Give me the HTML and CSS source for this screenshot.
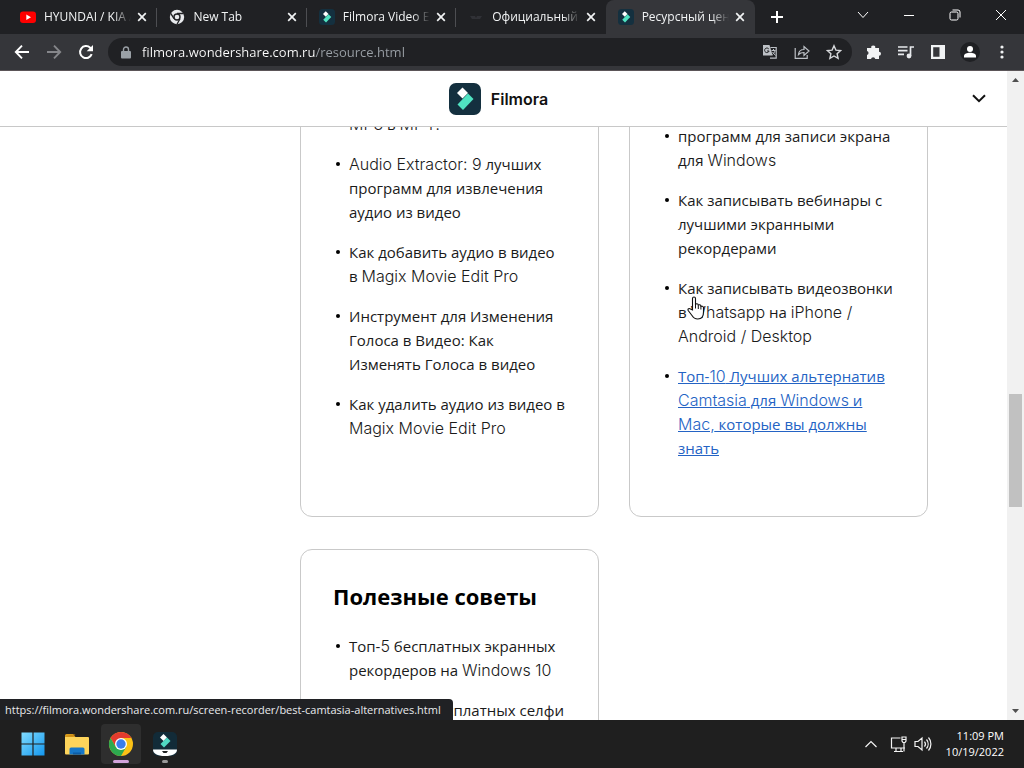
FILE: index.html
```html
<!DOCTYPE html>
<html lang="ru">
<head>
<meta charset="utf-8">
<title>Ресурсный центр</title>
<link rel="stylesheet" href="styles.css">
</head>
<body>
<svg class="defs" width="0" height="0" aria-hidden="true">
  <symbol id="x" viewBox="0 0 10 10"><path d="M1.2 1.2l7.6 7.6M8.8 1.2L1.2 8.8" stroke="#f1f3f4" stroke-width="1.7" fill="none"/></symbol>
  <symbol id="filmora" viewBox="0 0 32 32"><rect width="32" height="32" rx="7" fill="#14303f"/><path d="M13.5 4.500l5.500 5.500-5.500 5.500-5.500-5.500z" fill="#fff"/><path d="M19 10.500l5.500 5.500-10.500 11-5.500-5.500z" fill="#50e3c2"/></symbol>
</svg>

<header class="browser">
  <div class="tabstrip">
    <nav class="tabs" aria-label="Вкладки">
      <div class="tab">
        <svg class="favicon" viewBox="0 0 16 16"><rect y="2.500" width="16" height="11.500" rx="3" fill="#f00"/><path d="M6.300 5.600v5.300L11 8.200z" fill="#fff"/></svg>
        <span class="tab-title">HYUNDAI / KIA A</span>
        <button class="tab-close" aria-label="Закрыть"><svg width="10" height="10"><use href="#x"/></svg></button>
      </div>
      <div class="tab">
        <svg class="favicon" viewBox="0 0 16 16"><circle cx="8" cy="8" r="7.200" fill="#e8eaed"/><circle cx="8" cy="8" r="3" fill="#e8eaed" stroke="#202124" stroke-width="1.400"/><path d="M8 4.500h6.500M5 9.700L1.700 4.300M11 9.800L8 15.200" stroke="#202124" stroke-width="1.300"/></svg>
        <span class="tab-title">New Tab</span>
        <button class="tab-close" aria-label="Закрыть"><svg width="10" height="10"><use href="#x"/></svg></button>
      </div>
      <div class="tab">
        <svg class="favicon"><use href="#filmora"/></svg>
        <span class="tab-title">Filmora Video Ed</span>
        <button class="tab-close" aria-label="Закрыть"><svg width="10" height="10"><use href="#x"/></svg></button>
      </div>
      <div class="tab before-active">
        <svg class="favicon" viewBox="0 0 16 16"><path d="M2 7h5l1 2 1-2h5l-2 3H4z" fill="#303136"/></svg>
        <span class="tab-title">Официальный с</span>
        <button class="tab-close" aria-label="Закрыть"><svg width="10" height="10"><use href="#x"/></svg></button>
      </div>
      <div class="tab active">
        <svg class="favicon"><use href="#filmora"/></svg>
        <span class="tab-title">Ресурсный цент</span>
        <button class="tab-close" aria-label="Закрыть"><svg width="10" height="10"><use href="#x"/></svg></button>
      </div>
    </nav>
    <button class="new-tab" aria-label="Новая вкладка"><svg width="14" height="14" viewBox="0 0 14 14"><path d="M7 1v12M1 7h12" stroke="#fff" stroke-width="2"/></svg></button>
    <div class="window-controls">
      <button aria-label="Поиск вкладок"><svg width="12" height="12" viewBox="0 0 12 12"><path d="M1 3l5 5.500L11 3" class="thin"/></svg></button>
      <button aria-label="Свернуть"><svg width="12" height="12" viewBox="0 0 12 12"><path d="M1 6.500h10" class="thin"/></svg></button>
      <button aria-label="Развернуть"><svg width="12" height="12" viewBox="0 0 12 12"><rect x="1" y="3" width="8" height="8" rx="1.500" class="thin"/><path d="M3.500 1H9a2 2 0 0 1 2 2v5.500" class="thin"/></svg></button>
      <button aria-label="Закрыть окно"><svg width="12" height="12" viewBox="0 0 12 12"><path d="M1 1l10 10M11 1L1 11" class="thin"/></svg></button>
    </div>
  </div>

  <div class="toolbar">
    <div class="group">
      <button class="tool" aria-label="Назад"><svg viewBox="0 0 16 16"><path d="M15 8H2M8 1.700L1.800 8 8 14.300" fill="none" stroke="#fff" stroke-width="1.900"/></svg></button>
      <button class="tool" aria-label="Вперёд"><svg viewBox="0 0 16 16"><path d="M1 8h13M8 1.700L14.200 8 8 14.300" fill="none" stroke="#85868a" stroke-width="1.900"/></svg></button>
      <button class="tool" aria-label="Обновить"><svg viewBox="0 0 16 16"><path d="M13.700 10.200A6 6 0 1 1 12.200 3.700L14 5.500" fill="none" stroke="#fff" stroke-width="2"/><path d="M15 1v6.300H8.700z" fill="#fff"/></svg></button>
    </div>
    <div class="address">
      <svg class="lock" viewBox="0 0 10 13"><path d="M2.500 6V3.500a2.500 2.500 0 0 1 5 0V6" fill="none" stroke="#9aa0a6" stroke-width="1.400"/><rect y="5" width="10" height="7.500" rx="1" fill="#9aa0a6"/></svg>
      <input type="text" aria-label="Адресная строка" value="filmora.wondershare.com.ru/resource.html">
      <button class="tool" aria-label="Перевести"><svg viewBox="0 0 16 16"><path d="M8.500 3.500h5.700v10.700H8" fill="none" stroke="#bdc1c6" stroke-width="1.200"/><path d="M1 1h6.500l3.200 10.500H1z" fill="#bdc1c6"/><path d="M6.800 5A2.300 2.300 0 1 0 7.100 7H5" fill="none" stroke="#202124"/><path d="M9.500 6.500h4M11.500 5v1.500M13 6.500c-.4 2-1.500 3-2.500 4M10.500 8l3 3.500" fill="none" stroke="#bdc1c6"/></svg></button>
      <button class="tool" aria-label="Поделиться"><svg viewBox="0 0 16 16"><path d="M1.200 4v10.300h12V11M4.500 10.500c.4-3.500 2.500-5 5.500-5V2.500l5 4.500-5 4.500v-3c-2.500 0-4 .4-5.500 2z" fill="none" stroke="#bdc1c6" stroke-width="1.200"/></svg></button>
      <button class="tool" aria-label="Закладка"><svg viewBox="0 0 16 16"><path d="M8 1.800l1.900 4.300 4.700.5-3.500 3.100 1 4.700L8 12l-4.100 2.400 1-4.700-3.500-3.100 4.700-.5z" fill="none" stroke="#d5d7da" stroke-width="1.400"/></svg></button>
    </div>
    <div class="group">
      <button class="tool" aria-label="Расширения"><svg viewBox="0 0 16 16"><path d="M1 4h4.300a2 2 0 1 1 3.900 0H13v3.800a2 2 0 1 1 0 4V15H9.300a2.200 2.200 0 0 0-4.300 0H1v-3.900a2.200 2.200 0 0 0 0-4.200z" fill="#f1f3f4"/></svg></button>
      <button class="tool" aria-label="Медиа"><svg viewBox="0 0 16 16"><path d="M0 3h9.500M0 6.700h9.500M0 10.300h6M12.500 12V3H16" stroke="#e8eaed" stroke-width="1.700" fill="none"/><circle cx="11" cy="12" r="2.400" fill="#e8eaed"/></svg></button>
      <button class="tool" aria-label="Боковая панель"><svg viewBox="0 0 16 16"><path d="M1 1h14v14H1zM3.200 3.200v9.600h6.300V3.200z" fill="#f1f3f4" fill-rule="evenodd"/></svg></button>
      <button class="tool avatar" aria-label="Профиль"><svg viewBox="0 0 20 20"><circle cx="10" cy="10" r="10" fill="#1f2023"/><circle cx="10" cy="7" r="3" fill="#fff"/><path d="M4 15.500v-1.500c0-2.200 3-3.200 6-3.200s6 1 6 3.200v1.500z" fill="#fff"/></svg></button>
      <button class="tool" aria-label="Меню"><svg viewBox="0 0 16 16"><g fill="#f1f3f4"><circle cx="8" cy="3" r="1.600"/><circle cx="8" cy="8" r="1.600"/><circle cx="8" cy="13" r="1.600"/></g></svg></button>
    </div>
  </div>
</header>

<div class="viewport">
  <div class="site">
    <header class="site-header">
      <a class="brand" href="#"><svg width="32" height="32"><use href="#filmora"/></svg>Filmora</a>
      <button class="expand" aria-label="Открыть меню"><svg width="14" height="9" viewBox="0 0 14 9"><path d="M1 1.200l6 6 6-6" fill="none" stroke="#111" stroke-width="2"/></svg></button>
    </header>
    <main class="content">
      <div class="cards">
        <section class="card continued">
          <ul>
            <li><a href="#"><span class="latin">MP3</span> в <span class="latin">MP4?</span></a></li>
            <li><a href="#"><span class="latin">Audio Extractor: 9</span> лучших<br>программ для извлечения<br>аудио из видео</a></li>
            <li><a href="#">Как добавить аудио в видео<br>в <span class="latin">Magix Movie Edit Pro</span></a></li>
            <li><a href="#">Инструмент для Изменения<br>Голоса в Видео: Как<br>Изменять Голоса в видео</a></li>
            <li><a href="#">Как удалить аудио из видео в<br><span class="latin">Magix Movie Edit Pro</span></a></li>
          </ul>
        </section>
        <section class="card continued offset">
          <ul>
            <li><a href="#">программ для записи экрана<br>для <span class="latin">Windows</span></a></li>
            <li><a href="#">Как записывать вебинары с<br>лучшими экранными<br>рекордерами</a></li>
            <li><a href="#">Как записывать видеозвонки<br>в <span class="latin">Whatsapp</span> на <span class="latin">iPhone /</span><br><span class="latin">Android / Desktop</span></a></li>
            <li><a class="hovered" href="#">Топ-<span class="latin">10</span> Лучших альтернатив<br><span class="latin">Camtasia</span> для <span class="latin">Windows</span> и<br><span class="latin">Mac,</span> которые вы должны<br>знать</a></li>
          </ul>
        </section>
        <section class="card">
          <h2>Полезные советы</h2>
          <ul>
            <li><a href="#">Топ-<span class="latin">5</span> бесплатных экранных<br>рекордеров на <span class="latin">Windows 10</span></a></li>
            <li><a href="#"><span class="latin">10</span> лучших бесплатных селфи</a></li>
          </ul>
        </section>
      </div>
    </main>
  </div>
  <div class="scrollbar" aria-hidden="true">
    <svg width="7" height="4" viewBox="0 0 7 4"><path d="M0 4L3.500 0 7 4z" fill="#505050"/></svg>
    <div class="track"><div class="thumb"></div></div>
    <svg width="7" height="4" viewBox="0 0 7 4"><path d="M0 0l3.500 4L7 0z" fill="#505050"/></svg>
  </div>
  <div class="status">https://filmora.wondershare.com.ru/screen-recorder/best-camtasia-alternatives.html</div>
  <svg class="pointer" width="18" height="24" viewBox="0 0 18 24"><path d="M5.500 14V2.500a1.500 1.500 0 0 1 3 0V9c0-1.800 2.800-1.700 2.800.2v.6c0-1.500 2.600-1.300 2.600.4v.8c.2-1.300 2.600-1.100 2.600.6V16c0 4.500-2 7-5.700 7-3.300 0-4.600-1.400-6-3.800L1.200 14.500c-.8-1.600 1-2.600 2.300-1.400z" fill="#fff" stroke="#111" stroke-width="1.100"/><path d="M8.500 9v3.500M11.300 9.500v3.500M13.900 10.500v3" stroke="#111"/></svg>
</div>

<footer class="taskbar">
  <div class="apps">
    <button aria-label="Пуск"><svg width="24" height="24" viewBox="0 0 24 24"><defs><linearGradient id="win" x2="1" y2="1"><stop stop-color="#80dcff"/><stop offset="1" stop-color="#1397ee"/></linearGradient></defs><path d="M.5 .5H11.400V11.400H.5zM12.600 .5H23.500V11.400H12.600zM.5 12.600H11.400V23.500H.5zM12.600 12.600H23.500V23.500H12.600z" fill="url(#win)"/></svg></button>
    <button aria-label="Проводник"><svg width="26" height="24" viewBox="0 0 26 24"><path d="M1 3.500A1.500 1.500 0 0 1 2.500 2H9l2.500 3H1z" fill="#d79a1c"/><path d="M1 5h23.500l.5 1v15.500a1 1 0 0 1-1 1H2a1 1 0 0 1-1-1z" fill="#fdd45b"/><path d="M1 4.500h8L11.500 2.500H9z" fill="#c98a14"/><path d="M5.500 22.500v-5.500a1.500 1.500 0 0 1 1.500-1.500h12a1.500 1.500 0 0 1 1.500 1.500v5.500z" fill="#1677c8"/><path d="M9 22.500v-2h8v2z" fill="#0c5ca5"/></svg></button>
    <button class="current" aria-label="Chrome"><svg width="26" height="26" viewBox="0 0 26 26"><circle cx="13" cy="13" r="12" fill="#fbc116"/><path d="M2.600 7A12 12 0 0 1 23.400 7H13l-5.200 9z" fill="#e33b2e"/><path d="M2.600 7A12 12 0 0 0 13 25l5.200-9H7.800z" fill="#2da94f"/><circle cx="13" cy="13" r="6" fill="#fff"/><circle cx="13" cy="13" r="4.700" fill="#3a7ded"/></svg></button>
    <button class="running" aria-label="Filmora"><svg width="24" height="26" viewBox="0 0 24 26"><rect width="24" height="24" y="1" rx="5" fill="#122b38"/><path d="M10.500 3l3.500 3.500-3.500 3.500L7 6.500z" fill="#fff"/><path d="M14 6.500L17.500 10 11 16.500 7.500 13z" fill="#50d9c4"/><path d="M0 18.500h24c0 4-4 6.500-12 6.500S0 22.500 0 18.500z" fill="#fff"/><path d="M9 20h6l-1.500 2h-3z" fill="#222"/></svg></button>
  </div>
  <div class="tray">
    <button aria-label="Скрытые значки"><svg width="14" height="10" viewBox="0 0 14 10"><path d="M1.500 8L7 2.500 12.500 8" class="tray-line"/></svg></button>
    <button aria-label="Сеть"><svg width="18" height="18" viewBox="0 0 18 18"><path d="M10.500 3H1.500v10h13.500M6 13.500v3M11 13.500v3M4 16.500h9M12 2h4v4l-1 1.500h-2L12 6zM12 4.500h4M14 7.500v9" class="tray-line"/></svg></button>
    <button aria-label="Звук"><svg width="18" height="16" viewBox="0 0 18 16"><path d="M1 5.500h3L8 2v12l-4-3.500H1zM10.500 5.500a4 4 0 0 1 0 5M12.500 3.500a7 7 0 0 1 0 9M14.500 1.500a10 10 0 0 1 0 13" class="tray-line"/></svg></button>
    <time class="clock" datetime="2022-10-19T23:09">11:09 PM<br>10/19/2022</time>
  </div>
</footer>
</body>
</html>
```
FILE: styles.css
```css
* { box-sizing: border-box; }

body {
  margin: 0;
  height: 100vh;
  display: flex;
  flex-direction: column;
  overflow: hidden;
  font-family: "Open Sans", sans-serif;
  background: #fff;
}

button {
  display: flex;
  align-items: center;
  justify-content: center;
  padding: 0;
  border: 0;
  background: none;
  flex: none;
}

svg { flex: none; display: block; }
.defs { position: absolute; }
.thin { fill: none; stroke: #fff; stroke-width: 1; }

/* Browser chrome */
.browser { flex: none; border-bottom: 1px solid #5b5558; }

.tabstrip {
  display: flex;
  height: 34px;
  background: #202124;
  padding-left: 8px;
}

.tabs { display: flex; flex: 0 1 747px; min-width: 0; }

.tab {
  flex: 1 1 0;
  min-width: 0;
  display: flex;
  align-items: center;
  padding: 0 8px 0 12px;
  position: relative;
}

.tab:not(.active):not(.before-active)::after {
  content: "";
  position: absolute;
  right: 0;
  top: 8px;
  width: 1px;
  height: 19px;
  background: #4d4e52;
}

.tab.active { background: #35363a; border-radius: 8px 8px 0 0; }

.favicon { width: 16px; height: 16px; margin-right: 8px; }

.tab-title {
  flex: 1;
  min-width: 0;
  overflow: hidden;
  white-space: nowrap;
  font-size: 12px;
  line-height: 18px;
  color: #f1f3f4;
  mask-image: linear-gradient(90deg, #000 80%, transparent);
}

.tab-close { width: 14px; height: 16px; margin-left: 4px; }

.new-tab { width: 28px; margin-left: 8px; }
.window-controls { display: flex; margin-left: auto; padding-bottom: 5px; }
.window-controls button { width: 46px; }

.toolbar {
  display: flex;
  align-items: center;
  gap: 6px;
  height: 36px;
  padding: 0 6px;
  background: #35363a;
}

.group { display: flex; }
.tool { width: 32px; height: 28px; }
.tool svg { width: 16px; height: 16px; }
.avatar svg { width: 20px; height: 20px; }

.address {
  flex: 1;
  min-width: 0;
  height: 28px;
  display: flex;
  align-items: center;
  padding: 0 2px 0 13px;
  border-radius: 14px;
  background: #202124;
}

.lock { width: 10px; height: 13px; margin-right: 11px; }

.address input {
  flex: 1;
  min-width: 0;
  border: 0;
  padding: 0;
  font-family: "Open Sans", sans-serif;
  font-size: 13px;
  line-height: 20px;
  color: transparent;
  background: linear-gradient(90deg, #fff 173px, #9aa0a6 173px);
  background-clip: text;
  -webkit-background-clip: text;
}

/* Page area */
.viewport { flex: 1; min-height: 0; display: flex; position: relative; }

.site {
  flex: 1;
  min-width: 0;
  display: flex;
  flex-direction: column;
  overflow: hidden;
}

.site-header {
  flex: none;
  display: grid;
  grid-template-columns: 1fr auto 1fr;
  align-items: center;
  height: 56px;
  padding: 0 20px;
  border-bottom: 1px solid #c8c8c8;
}

.brand {
  grid-column: 2;
  display: flex;
  align-items: center;
  gap: 10px;
  padding-right: 10px;
  font: 600 16px/24px Inter, sans-serif;
  color: #111;
  text-decoration: none;
}

.expand { justify-self: end; width: 16px; height: 24px; }

.content {
  flex: 1;
  min-height: 0;
  overflow: hidden;
  padding: 0 79px 0 300px;
}

.cards {
  display: grid;
  grid-template-columns: repeat(2, minmax(0, 1fr));
  gap: 32px 30px;
  margin-top: -48px;
}

.card {
  padding: 32px 32px 40px;
  border: 1px solid #c9c9c9;
  border-radius: 12px;
}

.card.offset { padding-top: 44px; }

.card h2 {
  margin: 0 0 24px;
  font: 700 22px/28px "Open Sans", sans-serif;
  color: #000;
  white-space: nowrap;
}

.card ul { list-style: none; margin: 0; padding: 0 0 0 3px; }

.card li {
  display: flex;
  gap: 9px;
  margin-bottom: 16px;
  font-size: 15px;
  line-height: 24px;
  white-space: nowrap;
}

.card li::before {
  content: "";
  flex: none;
  width: 4px;
  height: 4px;
  margin-top: 10px;
  border-radius: 50%;
  background: #000;
}

.card a { color: #1a1a1a; text-decoration: none; }
.card a.hovered { color: #2463c4; text-decoration: underline; }
.latin { font: 300 16px/1 Inter, sans-serif; }

.scrollbar {
  flex: none;
  width: 17px;
  display: flex;
  flex-direction: column;
  align-items: center;
  padding: 7px 0;
  background: #f1f1f1;
}

.track { flex: 1; width: 13px; padding-top: 312px; }
.thumb { height: 113px; background: #c1c1c1; }

.status {
  position: absolute;
  left: 0;
  bottom: 0;
  height: 21px;
  padding: 0 12px 0 5px;
  border-radius: 0 4px 0 0;
  background: #202124;
  color: #e8eaed;
  font-size: 11px;
  line-height: 21px;
  white-space: nowrap;
}

.pointer { position: absolute; left: 687px; top: 225px; }

/* Taskbar */
.taskbar {
  flex: none;
  display: flex;
  justify-content: space-between;
  height: 48px;
  padding: 0 20px 0 13px;
  background: #1f1f1f;
}

.apps { display: flex; align-items: center; gap: 4px; }

.apps button {
  position: relative;
  width: 40px;
  height: 40px;
  border-radius: 4px;
}

.apps .current { background: #2e2e2e; }

.apps .current::after,
.apps .running::after {
  content: "";
  position: absolute;
  bottom: 1px;
  width: 16px;
  height: 3px;
  border-radius: 2px;
  background: #d3a4dc;
}

.apps .running::after { width: 6px; background: #9a9a9a; }

.tray { display: flex; align-items: center; gap: 6px; }
.tray button:first-child { margin-right: 6px; }
.tray-line { fill: none; stroke: #f4f4f4; stroke-width: 1.2; }

.clock {
  margin-left: 8px;
  font-size: 11px;
  line-height: 16px;
  color: #fff;
  text-align: right;
}
```
